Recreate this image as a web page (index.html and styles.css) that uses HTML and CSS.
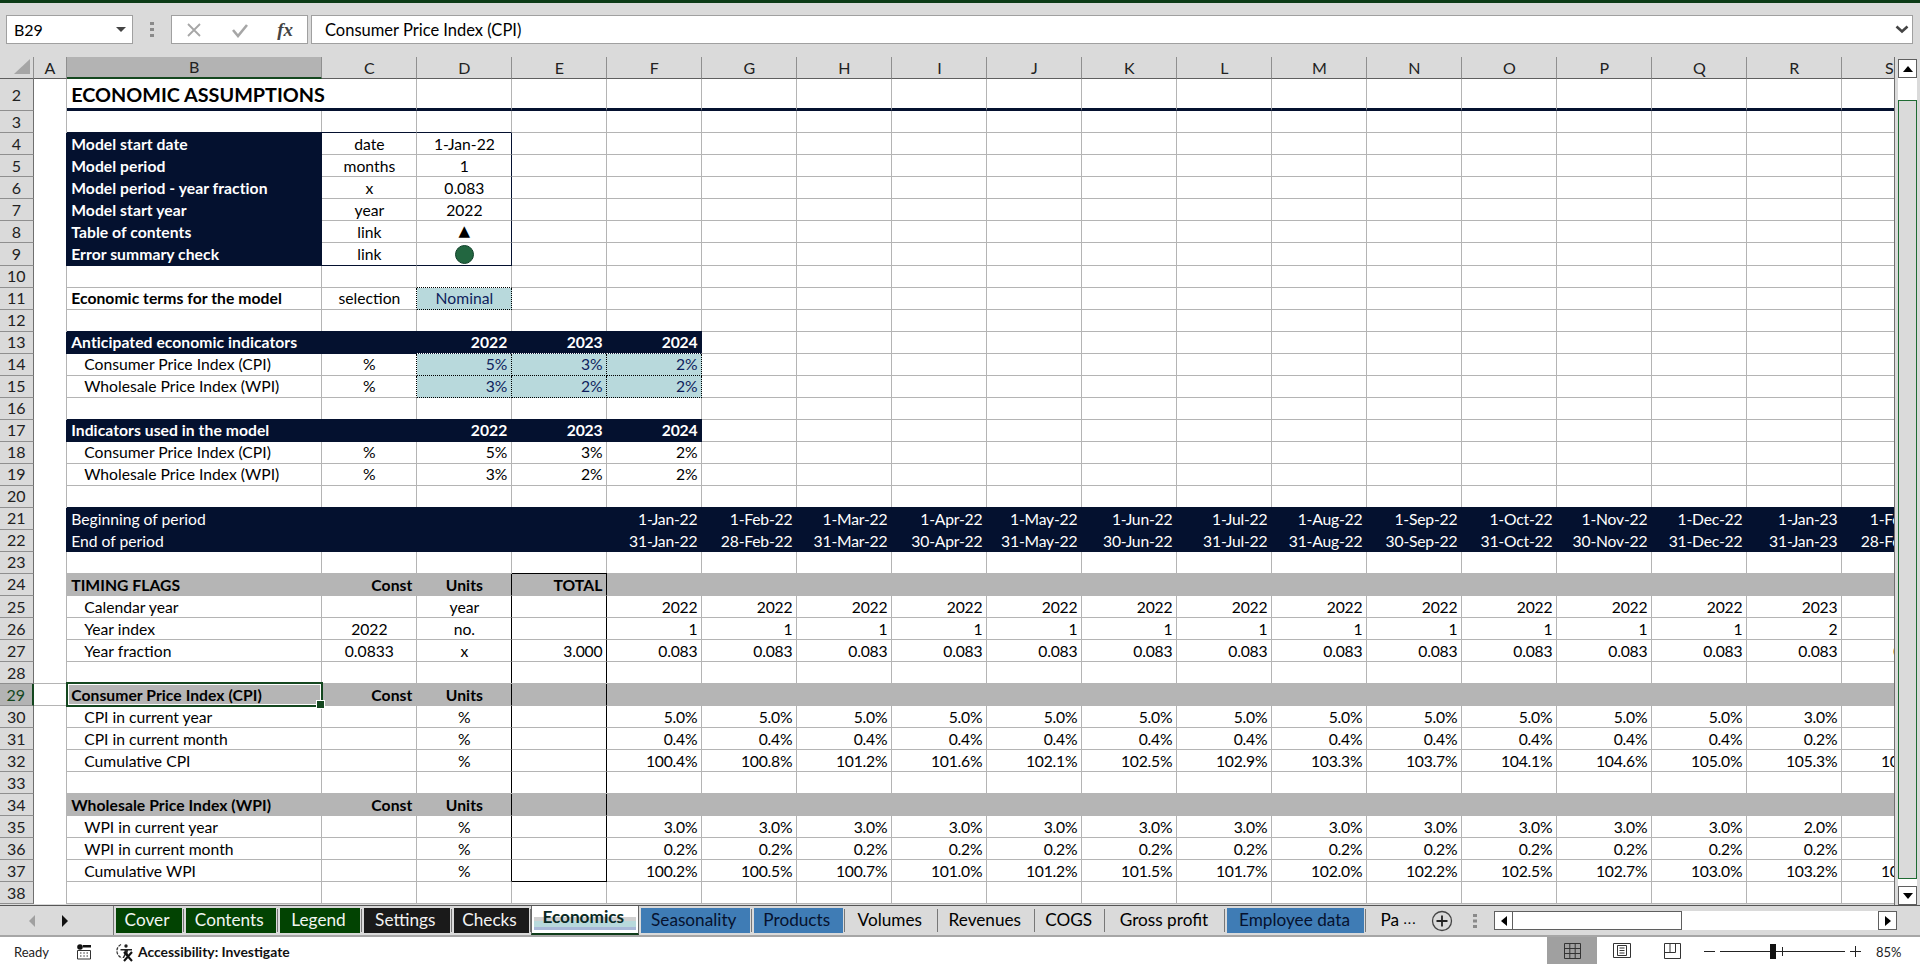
FILE: index.html
```html
<!DOCTYPE html>
<html lang="en">
<head>
<meta charset="utf-8">
<title>Economic assumptions</title>
<link rel="stylesheet" href="styles.css">
</head>
<body>
<div class="topbar"></div>
<div class="fbar">
  <div class="namebox"><span>B29</span><svg width="10" height="6" viewBox="0 0 10 6"><path d="M0 0h10L5 5z" fill="#444"/></svg></div>
  <svg class="grip" width="4" height="16" viewBox="0 0 4 16"><path d="M0 0h4v3H0zM0 6h4v3H0zM0 12h4v3H0z" fill="#8a8a8a"/></svg>
  <div class="fbtns">
    <svg width="16" height="16" viewBox="0 0 16 16"><path d="M2 2l12 12M14 2L2 14" stroke="#a6a6a6" stroke-width="1.8" fill="none"/></svg>
    <svg width="18" height="16" viewBox="0 0 18 16"><path d="M2 8l5 6L16 3" stroke="#a6a6a6" stroke-width="2.6" fill="none"/></svg>
    <span class="fx">fx</span>
  </div>
  <div class="finput"><span>Consumer Price Index (CPI)</span><svg width="14" height="9" viewBox="0 0 14 9"><path d="M1.5 1.5L7 6.5l5.500-5" stroke="#444" stroke-width="2.600" fill="none"/></svg></div>
</div>
<div class="main">
<div class="sheet">
<table class="grid">
<colgroup><col class="c-rh"><col class="c-a"><col class="c-b"><col class="c-n"><col class="c-n"><col class="c-n"><col class="c-n"><col class="c-n"><col class="c-n"><col class="c-n"><col class="c-n"><col class="c-n"><col class="c-n"><col class="c-n"><col class="c-n"><col class="c-n"><col class="c-n"><col class="c-n"><col class="c-n"><col class="c-n"><col class="c-n"></colgroup>
<tr class="hdr"><th class="corner"><svg width="16" height="15" viewBox="0 0 16 15"><path d="M16 0v15H0z" fill="#a6a6a6"/></svg></th><th>A</th><th class="csel">B</th><th>C</th><th>D</th><th>E</th><th>F</th><th>G</th><th>H</th><th>I</th><th>J</th><th>K</th><th>L</th><th>M</th><th>N</th><th>O</th><th>P</th><th>Q</th><th>R</th><th>S</th></tr>
<tr class="title"><th>2</th><td></td><td class="ttl nr">ECONOMIC ASSUMPTIONS</td><td class="ln"></td><td class="ln"></td><td class="ln"></td><td class="ln"></td><td class="ln"></td><td class="ln"></td><td class="ln"></td><td class="ln"></td><td class="ln"></td><td class="ln"></td><td class="ln"></td><td class="ln"></td><td class="ln"></td><td class="ln"></td><td class="ln"></td><td class="ln"></td><td class="ln"></td></tr>
<tr><th>3</th><td></td><td></td><td class="bb"></td><td class="bb"></td><td></td><td></td><td></td><td></td><td></td><td></td><td></td><td></td><td></td><td></td><td></td><td></td><td></td><td></td><td></td></tr>
<tr><th>4</th><td></td><td class="nv b">Model start date</td><td>date</td><td class="br">1-Jan-22</td><td></td><td></td><td></td><td></td><td></td><td></td><td></td><td></td><td></td><td></td><td></td><td></td><td></td><td></td><td></td></tr>
<tr><th>5</th><td></td><td class="nv b">Model period</td><td>months</td><td class="br">1</td><td></td><td></td><td></td><td></td><td></td><td></td><td></td><td></td><td></td><td></td><td></td><td></td><td></td><td></td><td></td></tr>
<tr><th>6</th><td></td><td class="nv b">Model period - year fraction</td><td>x</td><td class="br">0.083</td><td></td><td></td><td></td><td></td><td></td><td></td><td></td><td></td><td></td><td></td><td></td><td></td><td></td><td></td><td></td></tr>
<tr><th>7</th><td></td><td class="nv b">Model start year</td><td>year</td><td class="br">2022</td><td></td><td></td><td></td><td></td><td></td><td></td><td></td><td></td><td></td><td></td><td></td><td></td><td></td><td></td><td></td></tr>
<tr><th>8</th><td></td><td class="nv b">Table of contents</td><td>link</td><td class="br tri">▲</td><td></td><td></td><td></td><td></td><td></td><td></td><td></td><td></td><td></td><td></td><td></td><td></td><td></td><td></td><td></td></tr>
<tr><th>9</th><td></td><td class="nv b">Error summary check</td><td class="bb">link</td><td class="br bb cdot"><span class="dot"></span></td><td></td><td></td><td></td><td></td><td></td><td></td><td></td><td></td><td></td><td></td><td></td><td></td><td></td><td></td><td></td></tr>
<tr><th>10</th><td></td><td></td><td></td><td class="db"></td><td></td><td></td><td></td><td></td><td></td><td></td><td></td><td></td><td></td><td></td><td></td><td></td><td></td><td></td><td></td></tr>
<tr><th>11</th><td></td><td class="b">Economic terms for the model</td><td class="dr">selection</td><td class="inp">Nominal</td><td></td><td></td><td></td><td></td><td></td><td></td><td></td><td></td><td></td><td></td><td></td><td></td><td></td><td></td><td></td></tr>
<tr><th>12</th><td></td><td></td><td></td><td></td><td></td><td></td><td></td><td></td><td></td><td></td><td></td><td></td><td></td><td></td><td></td><td></td><td></td><td></td><td></td></tr>
<tr><th>13</th><td></td><td class="nv b">Anticipated economic indicators</td><td class="nv"></td><td class="nv b r dw">2022</td><td class="nv b dw">2023</td><td class="nv b dw">2024</td><td></td><td></td><td></td><td></td><td></td><td></td><td></td><td></td><td></td><td></td><td></td><td></td><td></td></tr>
<tr><th>14</th><td></td><td class="in">Consumer Price Index (CPI)</td><td class="dr">%</td><td class="inp r">5%</td><td class="inp">3%</td><td class="inp">2%</td><td></td><td></td><td></td><td></td><td></td><td></td><td></td><td></td><td></td><td></td><td></td><td></td><td></td></tr>
<tr><th>15</th><td></td><td class="in">Wholesale Price Index (WPI)</td><td class="dr">%</td><td class="inp r">3%</td><td class="inp">2%</td><td class="inp">2%</td><td></td><td></td><td></td><td></td><td></td><td></td><td></td><td></td><td></td><td></td><td></td><td></td><td></td></tr>
<tr><th>16</th><td></td><td></td><td></td><td></td><td></td><td></td><td></td><td></td><td></td><td></td><td></td><td></td><td></td><td></td><td></td><td></td><td></td><td></td><td></td></tr>
<tr><th>17</th><td></td><td class="nv b">Indicators used in the model</td><td class="nv"></td><td class="nv b r">2022</td><td class="nv b">2023</td><td class="nv b">2024</td><td></td><td></td><td></td><td></td><td></td><td></td><td></td><td></td><td></td><td></td><td></td><td></td><td></td></tr>
<tr><th>18</th><td></td><td class="in">Consumer Price Index (CPI)</td><td>%</td><td class="r">5%</td><td>3%</td><td>2%</td><td></td><td></td><td></td><td></td><td></td><td></td><td></td><td></td><td></td><td></td><td></td><td></td><td></td></tr>
<tr><th>19</th><td></td><td class="in">Wholesale Price Index (WPI)</td><td>%</td><td class="r">3%</td><td>2%</td><td>2%</td><td></td><td></td><td></td><td></td><td></td><td></td><td></td><td></td><td></td><td></td><td></td><td></td><td></td></tr>
<tr><th>20</th><td></td><td></td><td></td><td></td><td></td><td></td><td></td><td></td><td></td><td></td><td></td><td></td><td></td><td></td><td></td><td></td><td></td><td></td><td></td></tr>
<tr><th>21</th><td></td><td class="nv">Beginning of period</td><td class="nv"></td><td class="nv"></td><td class="nv"></td><td class="nv">1-Jan-22</td><td class="nv">1-Feb-22</td><td class="nv">1-Mar-22</td><td class="nv">1-Apr-22</td><td class="nv">1-May-22</td><td class="nv">1-Jun-22</td><td class="nv">1-Jul-22</td><td class="nv">1-Aug-22</td><td class="nv">1-Sep-22</td><td class="nv">1-Oct-22</td><td class="nv">1-Nov-22</td><td class="nv">1-Dec-22</td><td class="nv">1-Jan-23</td><td class="nv">1-Feb-23</td></tr>
<tr><th>22</th><td></td><td class="nv">End of period</td><td class="nv"></td><td class="nv"></td><td class="nv"></td><td class="nv">31-Jan-22</td><td class="nv">28-Feb-22</td><td class="nv">31-Mar-22</td><td class="nv">30-Apr-22</td><td class="nv">31-May-22</td><td class="nv">30-Jun-22</td><td class="nv">31-Jul-22</td><td class="nv">31-Aug-22</td><td class="nv">30-Sep-22</td><td class="nv">31-Oct-22</td><td class="nv">30-Nov-22</td><td class="nv">31-Dec-22</td><td class="nv">31-Jan-23</td><td class="nv">28-Feb-23</td></tr>
<tr><th>23</th><td></td><td></td><td></td><td></td><td class="kb"></td><td></td><td></td><td></td><td></td><td></td><td></td><td></td><td></td><td></td><td></td><td></td><td></td><td></td><td></td></tr>
<tr><th>24</th><td></td><td class="gy">TIMING FLAGS</td><td class="gy r">Const</td><td class="gy kr">Units</td><td class="gy kr kt">TOTAL</td><td class="gy"></td><td class="gy"></td><td class="gy"></td><td class="gy"></td><td class="gy"></td><td class="gy"></td><td class="gy"></td><td class="gy"></td><td class="gy"></td><td class="gy"></td><td class="gy"></td><td class="gy"></td><td class="gy"></td><td class="gy"></td></tr>
<tr><th>25</th><td></td><td class="in">Calendar year</td><td></td><td class="kr">year</td><td class="kr"></td><td>2022</td><td>2022</td><td>2022</td><td>2022</td><td>2022</td><td>2022</td><td>2022</td><td>2022</td><td>2022</td><td>2022</td><td>2022</td><td>2022</td><td>2023</td><td>2023</td></tr>
<tr><th>26</th><td></td><td class="in">Year index</td><td>2022</td><td class="kr">no.</td><td class="kr"></td><td>1</td><td>1</td><td>1</td><td>1</td><td>1</td><td>1</td><td>1</td><td>1</td><td>1</td><td>1</td><td>1</td><td>1</td><td>2</td><td>2</td></tr>
<tr><th>27</th><td></td><td class="in">Year fraction</td><td>0.0833</td><td class="kr">x</td><td class="kr">3.000</td><td>0.083</td><td>0.083</td><td>0.083</td><td>0.083</td><td>0.083</td><td>0.083</td><td>0.083</td><td>0.083</td><td>0.083</td><td>0.083</td><td>0.083</td><td>0.083</td><td>0.083</td><td>0.083</td></tr>
<tr><th>28</th><td class="ag"></td><td></td><td></td><td class="kr"></td><td class="kr"></td><td></td><td></td><td></td><td></td><td></td><td></td><td></td><td></td><td></td><td></td><td></td><td></td><td></td><td></td></tr>
<tr><th class="rsel">29</th><td class="ag"></td><td class="gy sel">Consumer Price Index (CPI)</td><td class="gy r">Const</td><td class="gy kr">Units</td><td class="gy kr"></td><td class="gy"></td><td class="gy"></td><td class="gy"></td><td class="gy"></td><td class="gy"></td><td class="gy"></td><td class="gy"></td><td class="gy"></td><td class="gy"></td><td class="gy"></td><td class="gy"></td><td class="gy"></td><td class="gy"></td><td class="gy"></td></tr>
<tr><th>30</th><td></td><td class="in">CPI in current year</td><td></td><td class="kr">%</td><td class="kr"></td><td>5.0%</td><td>5.0%</td><td>5.0%</td><td>5.0%</td><td>5.0%</td><td>5.0%</td><td>5.0%</td><td>5.0%</td><td>5.0%</td><td>5.0%</td><td>5.0%</td><td>5.0%</td><td>3.0%</td><td>3.0%</td></tr>
<tr><th>31</th><td></td><td class="in">CPI in current month</td><td></td><td class="kr">%</td><td class="kr"></td><td>0.4%</td><td>0.4%</td><td>0.4%</td><td>0.4%</td><td>0.4%</td><td>0.4%</td><td>0.4%</td><td>0.4%</td><td>0.4%</td><td>0.4%</td><td>0.4%</td><td>0.4%</td><td>0.2%</td><td>0.2%</td></tr>
<tr><th>32</th><td></td><td class="in">Cumulative CPI</td><td></td><td class="kr">%</td><td class="kr"></td><td>100.4%</td><td>100.8%</td><td>101.2%</td><td>101.6%</td><td>102.1%</td><td>102.5%</td><td>102.9%</td><td>103.3%</td><td>103.7%</td><td>104.1%</td><td>104.6%</td><td>105.0%</td><td>105.3%</td><td>105.6%</td></tr>
<tr><th>33</th><td></td><td></td><td></td><td class="kr"></td><td class="kr"></td><td></td><td></td><td></td><td></td><td></td><td></td><td></td><td></td><td></td><td></td><td></td><td></td><td></td><td></td></tr>
<tr><th>34</th><td></td><td class="gy">Wholesale Price Index (WPI)</td><td class="gy r">Const</td><td class="gy kr">Units</td><td class="gy kr"></td><td class="gy"></td><td class="gy"></td><td class="gy"></td><td class="gy"></td><td class="gy"></td><td class="gy"></td><td class="gy"></td><td class="gy"></td><td class="gy"></td><td class="gy"></td><td class="gy"></td><td class="gy"></td><td class="gy"></td><td class="gy"></td></tr>
<tr><th>35</th><td></td><td class="in">WPI in current year</td><td></td><td class="kr">%</td><td class="kr"></td><td>3.0%</td><td>3.0%</td><td>3.0%</td><td>3.0%</td><td>3.0%</td><td>3.0%</td><td>3.0%</td><td>3.0%</td><td>3.0%</td><td>3.0%</td><td>3.0%</td><td>3.0%</td><td>2.0%</td><td>2.0%</td></tr>
<tr><th>36</th><td></td><td class="in">WPI in current month</td><td></td><td class="kr">%</td><td class="kr"></td><td>0.2%</td><td>0.2%</td><td>0.2%</td><td>0.2%</td><td>0.2%</td><td>0.2%</td><td>0.2%</td><td>0.2%</td><td>0.2%</td><td>0.2%</td><td>0.2%</td><td>0.2%</td><td>0.2%</td><td>0.2%</td></tr>
<tr><th>37</th><td></td><td class="in">Cumulative WPI</td><td></td><td class="kr">%</td><td class="kr kb"></td><td>100.2%</td><td>100.5%</td><td>100.7%</td><td>101.0%</td><td>101.2%</td><td>101.5%</td><td>101.7%</td><td>102.0%</td><td>102.2%</td><td>102.5%</td><td>102.7%</td><td>103.0%</td><td>103.2%</td><td>103.4%</td></tr>
<tr><th>38</th><td></td><td></td><td></td><td></td><td></td><td></td><td></td><td></td><td></td><td></td><td></td><td></td><td></td><td></td><td></td><td></td><td></td><td></td><td></td></tr>
</table>
</div>
<div class="vscroll">
  <div class="sbtn"><svg width="10" height="6" viewBox="0 0 10 6"><path d="M5 0l5 6H0z" fill="#000"/></svg></div>
  <div class="vtrack"><div class="vthumb"></div></div>
  <div class="sbtn"><svg width="10" height="6" viewBox="0 0 10 6"><path d="M0 0h10L5 6z" fill="#000"/></svg></div>
</div>
</div>
<div class="tabstrip">
  <div class="tabnav">
    <svg width="6" height="12" viewBox="0 0 6 12"><path d="M6 0v12L0 6z" fill="#a0a0a0"/></svg>
    <svg width="6" height="12" viewBox="0 0 6 12"><path d="M0 0v12l6-6z" fill="#111"/></svg>
  </div>
  <div class="tabs">
    <div class="tab"><span class="fill green">Cover</span></div>
    <div class="tab"><span class="fill green">Contents</span></div>
    <div class="tab"><span class="fill green">Legend</span></div>
    <div class="tab"><span class="fill black">Settings</span></div>
    <div class="tab"><span class="fill black">Checks</span></div>
    <div class="tab active"><span class="fill">Economics</span></div>
    <div class="tab"><span class="fill blue">Seasonality</span></div>
    <div class="tab"><span class="fill blue">Products</span></div>
    <div class="tab"><span class="fill">Volumes</span></div>
    <div class="tab"><span class="fill">Revenues</span></div>
    <div class="tab"><span class="fill">COGS</span></div>
    <div class="tab"><span class="fill">Gross profit</span></div>
    <div class="tab"><span class="fill blue">Employee data</span></div>
    <div class="tab last"><span class="fill">Pa</span></div>
  </div>
  <span class="more">...</span>
  <svg class="addsheet" width="22" height="22" viewBox="0 0 22 22"><circle cx="11" cy="11" r="9.500" fill="none" stroke="#444" stroke-width="1.300"/><path d="M11 5.500v11M5.500 11h11" stroke="#222" stroke-width="1.800"/></svg>
  <svg class="grip2" width="4" height="14" viewBox="0 0 4 14"><path d="M0 0h4v3H0zM0 5.500h4v3H0zM0 11h4v3H0z" fill="#8a8a8a"/></svg>
  <div class="hscroll">
    <div class="hbtn"><svg width="6" height="10" viewBox="0 0 6 10"><path d="M6 0v10L0 5z" fill="#000"/></svg></div>
    <div class="hthumb"></div>
    <div class="hbtn end"><svg width="6" height="10" viewBox="0 0 6 10"><path d="M0 0v10l6-5z" fill="#000"/></svg></div>
  </div>
</div>
<div class="status">
  <span class="ready">Ready</span>
  <svg class="macro" width="16" height="16" viewBox="0 0 16 16"><circle cx="4" cy="3" r="2.800" fill="#111"/><path d="M7 1h8v2.500H7z" fill="#111"/><path d="M1.500 6.500h13v8.500h-13z" fill="#fff" stroke="#333"/><path d="M4 9h1.500M7.300 9h1.500M10.500 9H12M4 12h1.500M7.300 12h1.500M10.500 12H12" stroke="#333" stroke-width="1.200"/></svg>
  <svg class="acc" width="20" height="20" viewBox="0 0 20 20"><path d="M6 2.500C3 4 1.500 7 2 10c.5 3 2.500 5 5 6" fill="none" stroke="#333" stroke-width="1.300" stroke-dasharray="3 1.200"/><circle cx="11" cy="4" r="1.700" fill="#222"/><path d="M5.500 7h11.500v1.500h-4l-.5 2.500 2.500 5h-1.700L11 12l-2 4H7.500l2.500-5-.5-2.500h-4z" fill="#222"/><path d="M9 10l8 9M17 10l-8 9" stroke="#111" stroke-width="2.100"/></svg>
  <span class="accl">Accessibility: Investigate</span>
  <div class="views">
    <div class="view on"><svg width="17" height="16" viewBox="0 0 17 16"><path d="M.5.500h16v15H.500zM.5 5.500h16M.5 10.500h16M5.800.5v15M11.200.5v15" fill="none" stroke="#333"/></svg></div>
    <div class="view"><svg width="18" height="15" viewBox="0 0 18 15"><path d="M.5.500h17v14H.500z" fill="#fff" stroke="#333"/><path d="M4.500 2.500h9v10h-9zM6.500 5h5M6.500 7.500h5M6.500 10h5" fill="none" stroke="#333"/></svg></div>
    <div class="view"><svg width="17" height="16" viewBox="0 0 17 16"><path d="M.5.500h16v15H.500zM.5 9.500h11V.5M6 .5v9" fill="none" stroke="#333"/></svg></div>
  </div>
  <div class="zoom">
    <span class="zm"></span>
    <div class="slider"><span class="tick"></span><span class="knob"></span></div>
    <span class="zp"></span>
    <span class="pct">85%</span>
  </div>
</div>
</body>
</html>
```
FILE: styles.css
```css
* { box-sizing: border-box; }
html, body { margin: 0; padding: 0; }
body {
  width: 1920px;
  height: 966px;
  overflow: hidden;
  display: flex;
  flex-direction: column;
  background: #dadada;
  font-family: Lato, "Liberation Sans", sans-serif;
  color: #000;
}
.topbar { height: 3px; background: #0c3b16; flex: none; }

/* formula bar */
.fbar {
  height: 54px;
  flex: none;
  display: flex;
  align-items: center;
  padding: 0 7px 1px 6px;
}
.namebox, .fbtns, .finput {
  height: 29px;
  background: #fff;
  border: 1px solid #a0a0a0;
  display: flex;
  align-items: center;
}
.namebox {
  width: 127px;
  padding: 0 6px 0 7px;
  justify-content: space-between;
  font-size: 16px;
}
.grip { margin: 0 17px 0 17px; flex: none; }
.fbtns {
  width: 137px;
  padding: 0 14px 0 14px;
  justify-content: space-between;
}
.fx {
  font-family: "Liberation Serif", serif;
  font-style: italic;
  font-weight: bold;
  font-size: 19px;
  color: #444;
}
.finput {
  flex: 1;
  margin-left: 3px;
  padding: 0 3px 0 13px;
  justify-content: space-between;
  font-size: 16.500px;
}

/* sheet */
.main { height: 848px; flex: none; display: flex; }
.sheet { width: 1895px; flex: none; overflow: hidden; border-right: 1px solid #6f6f6f; }
.grid {
  table-layout: fixed;
  width: 1937.4px;
  border-collapse: separate;
  border-spacing: 0;
  font-size: 15.700px;
  line-height: 1;
}
.c-rh, .c-a { width: 33.6px; }
.c-b { width: 255.2px; }
.c-n { width: 95px; }
.grid tr { height: 22.04px; }
.grid tr.hdr { height: 22.3px; }
.grid tr.title { height: 32px; }
.grid th {
  padding: 0;
  background: #dadada;
  font-weight: normal;
  font-size: 16px;
  color: #222;
  text-align: center;
  border-right: 1px solid #6f6f6f;
  border-bottom: 1px solid #8f8f8f;
}
.hdr th {
  border-right-color: #8f8f8f;
  border-bottom: 1px solid #5f5f5f;
}
.hdr th.corner { text-align: right; padding-right: 3px; vertical-align: middle; }
.hdr th.csel { background: #b3b3b3; border-bottom: 2px solid #14471f; }
.grid th.rsel { background: #b3b3b3; color: #14471f; border-right: 2px solid #14471f; }
.grid td {
  padding: 2px 4px 0;
  white-space: nowrap;
  text-align: left;
  vertical-align: middle;
  background: #fff;
  border-right: 1px solid #b4b4b4;
  border-bottom: 1px solid #b4b4b4;
}
.grid td:nth-child(2) { border-bottom: none; }
.grid td:nth-child(4), .grid td:nth-child(5) { text-align: center; }
.grid td:nth-child(n+6) { text-align: right; letter-spacing: -.2px; }
.grid td.ag { border-bottom: 1px solid #b4b4b4; }
.grid td.r { text-align: right; }
.b { font-weight: bold; letter-spacing: .05px; }
.grid td.in { padding-left: 17px; }

.grid td.ttl { font-size: 19.800px; font-weight: bold; }
.grid td.ttl, .grid td.ln { border-bottom: 3px solid #04112f; }
.grid td.nr { border-right: none; }

.grid td.nv {
  background: #04112f;
  color: #fff;
  border-color: #04112f;
  box-shadow: 0 -1px 0 #04112f;
}
.grid td.gy {
  background: #b5b5b5;
  font-weight: bold;
  letter-spacing: .05px;
  border-color: #b5b5b5;
  box-shadow: 0 -1px 0 #b5b5b5;
}
.grid td.nv:nth-child(3) { box-shadow: 0 -1px 0 #04112f, -1px 0 0 #04112f; }
.grid td.gy:nth-child(3) { box-shadow: 0 -1px 0 #b5b5b5, -1px 0 0 #b5b5b5; }
.grid td.nv.dw { border-bottom: 1px dotted #fff; }

.grid td.bb { border-bottom: 1px solid #04112f; }
.grid td.br { border-right: 1px solid #04112f; }
.grid td.db { border-bottom: 1px dotted #000; }
.grid td.dr { border-right: 1px dotted #000; }
.grid td.inp {
  background: #b8d9dc;
  color: #0f1f5c;
  border-right: 1px dotted #000;
  border-bottom: 1px dotted #000;
}
.grid td.kr { border-right: 1px solid #000; }
.grid td.kb { border-bottom: 1px solid #000; }
.grid td.gy.kt { box-shadow: 0 -1px 0 #000; }
.grid td.tri { font-family: "DejaVu Sans", sans-serif; font-size: 15px; padding-top: 0; }
.grid td.cdot { padding-top: 0; }
.dot {
  display: block;
  width: 19px;
  height: 19px;
  margin: 0 auto;
  border-radius: 50%;
  background: #226640;
  border: 1px solid #10402a;
}
.grid td.sel { position: relative; }
.sel::after {
  content: "";
  position: absolute;
  z-index: 2;
  top: -2px;
  left: -1px;
  right: -2px;
  bottom: -2px;
  border: 2px solid #14471f;
  box-shadow: inset 0 0 0 1px #fff;
}
.sel::before {
  content: "";
  position: absolute;
  z-index: 3;
  right: -4px;
  bottom: -4px;
  width: 7px;
  height: 7px;
  background: #14471f;
  border: 1px solid #fff;
}

/* vertical scroll bar */
.vscroll {
  flex: 1;
  display: flex;
  flex-direction: column;
  padding: 2px 3px 0 3px;
}
.sbtn {
  height: 19px;
  flex: none;
  background: #fff;
  border: 1px solid #5f5f5f;
  display: flex;
  align-items: center;
  justify-content: center;
}
.vtrack { flex: 1; background: #fff; padding: 22px 0 7px; }
.vthumb { height: 100%; background: #dadada; border: 1px solid #1f6b33; }

/* sheet tabs */
.tabstrip {
  height: 32px;
  flex: none;
  display: flex;
  align-items: center;
  border-top: 1px solid #555;
  border-bottom: 2px solid #a6a6a6;
}
.tabnav {
  width: 112.5px;
  height: 100%;
  flex: none;
  display: flex;
  align-items: center;
  gap: 27px;
  padding-left: 29px;
}
.tabs {
  width: 1287.5px;
  flex: none;
  height: 100%;
  display: grid;
  grid-template-columns: 70px 94.5px 84px 89.5px 79px 108.5px 112.5px 93.5px 92.6px 97.4px 70.5px 120px 141px 35px;
  border-left: 1px solid #777;
  overflow: hidden;
}
.tab {
  display: flex;
  padding: 2px 2px 2px 2px;
  position: relative;
  font-size: 17.200px;
}
.tab::after {
  content: "";
  position: absolute;
  right: 0;
  top: 3px;
  bottom: 3px;
  border-right: 1px solid #777;
}
.fill { flex: 1; display: flex; align-items: center; justify-content: center; padding: 0 3px 3px 0; white-space: nowrap; }
.green { background: #024302; color: #f2f6f2; }
.black { background: #1a1a1a; color: #f2f2f2; }
.blue { background: #3f7cb5; color: #06122e; }
.tab.last .fill { justify-content: flex-start; padding-left: 12px; }
.tab.last::after { display: none; }
.tab.active {
  margin-top: -1px;
  padding: 0 2px 3px;
  background: #fff;
  border-left: 1px solid #666;
  border-right: 1px solid #666;
  border-bottom: 2px solid #0f3d1a;
  font-weight: bold;
  color: #0a2a24;
}
.tab.active::after { display: none; }
.tab.active .fill {
  background: linear-gradient(#fff 0 12px, #d0d0d0 12px 16px, #b8d9dc 16px 22px, #a9b8d8 22px);
}
.more { width: 20px; text-align: center; font-size: 14px; letter-spacing: 1px; padding-bottom: 5px; }
.addsheet { margin-left: 11px; flex: none; }
.grip2 { margin-left: 20px; flex: none; }
.hscroll {
  width: 403px;
  height: 19px;
  margin-left: 17px;
  flex: none;
  display: flex;
  background: #fff;
}
.hbtn {
  width: 19px;
  flex: none;
  border: 1px solid #5f5f5f;
  display: flex;
  align-items: center;
  justify-content: center;
  background: #fff;
}
.hbtn.end { margin-left: auto; }
.hthumb { width: 169px; border: 1px solid #5f5f5f; border-left: none; background: #fff; }

/* status bar */
.status {
  height: 29px;
  flex: none;
  background: #fff;
  display: flex;
  align-items: center;
  font-size: 13px;
  color: #222;
}
.ready { margin-left: 14px; width: 62px; }
.macro { flex: none; }
.acc { flex: none; margin-left: 23px; }
.accl { margin-left: 3px; font-weight: bold; font-size: 13.900px; color: #111; }
.views { margin-left: auto; display: flex; height: 100%; padding-bottom: 2px; }
.view { width: 50px; display: flex; align-items: center; justify-content: center; }
.view.on { background: #a0a0a0; }
.zoom { display: flex; align-items: center; width: 223px; padding-left: 7px; flex: none; }
.zm { width: 11px; height: 1.500px; background: #222; }
.slider { position: relative; width: 125px; height: 1.500px; margin-left: 5px; background: #222; }
.tick { position: absolute; left: 62px; top: -4px; width: 1px; height: 9px; background: #222; }
.knob { position: absolute; left: 50px; top: -7px; width: 6px; height: 15px; background: #111; }
.zp { position: relative; width: 11px; height: 1.500px; margin-left: 5px; background: #222; }
.zp::after { content: ""; position: absolute; left: 4.800px; top: -4.800px; width: 1.500px; height: 11px; background: #222; }
.pct { margin-left: 15px; font-size: 13px; }
```
